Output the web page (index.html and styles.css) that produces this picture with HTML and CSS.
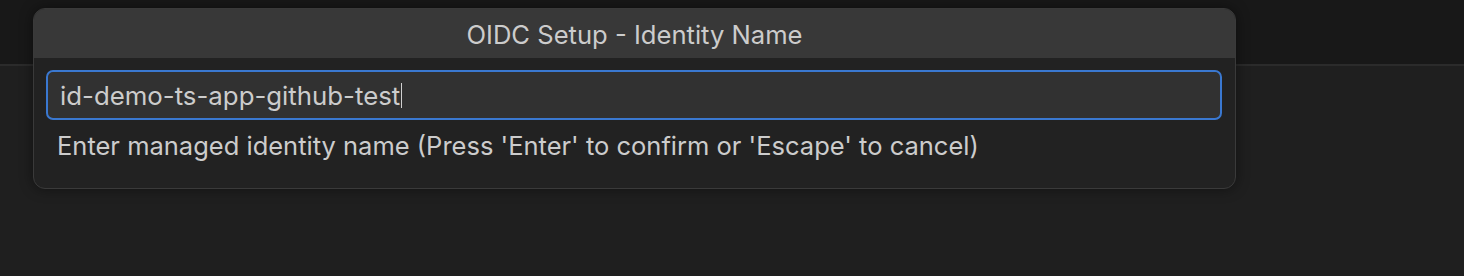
FILE: index.html
```html
<!DOCTYPE html>
<html lang="en">
<head>
    <meta charset="UTF-8">
    <title>OIDC Setup - Identity Name</title>
<link rel="stylesheet" href="styles.css">
</head>
<body>
    <div class="titlebar"></div>
    <div class="editor"></div>

    <div class="quick-input">
        <div class="qi-title">OIDC Setup - Identity Name</div>
        <div class="qi-body">
            <div class="qi-box">
                <span class="qi-value">id-demo-ts-app-github-test</span><span class="caret"></span>
            </div>
            <div class="qi-message">Enter managed identity name (Press 'Enter' to confirm or 'Escape' to cancel)</div>
        </div>
    </div>
</body>
</html>
```

FILE: styles.css
```css
* {
    box-sizing: border-box;
}

body {
    margin: 0;
    background-color: #1f1f1f;
    font-family: Inter, "Noto Sans", sans-serif;
    height: 276px;
    overflow: hidden;
}

.titlebar {
    height: 66px;
    background-color: #181818;
    border-bottom: 2px solid #2b2b2b;
}

.quick-input {
    position: absolute;
    top: 8px;
    left: 33px;
    width: 1203px;
    height: 181px;
    background-color: #222222;
    border: 1px solid #3a3a3a;
    border-radius: 12px;
    overflow: hidden;
    box-shadow: 0 0 14px rgba(0, 0, 0, 0.45);
}

.qi-title {
    height: 49px;
    background-color: #383838;
    color: #cccccc;
    font-size: 25.6px;
    text-align: center;
    line-height: 52px;
}

.qi-body {
    padding: 12px 13px 0 12px;
}

.qi-box {
    height: 50px;
    border: 2px solid #3a78d0;
    border-radius: 7px;
    background-color: #313131;
    display: flex;
    align-items: center;
    padding-left: 12px;
    color: #cccccc;
    font-size: 25.8px;
}

.caret {
    width: 1px;
    height: 25px;
    background-color: #d0d0d0;
    margin-left: 1px;
}

.qi-message {
    color: #cccccc;
    font-size: 25.5px;
    line-height: 30px;
    padding: 11px 0 0 11px;
}
```
